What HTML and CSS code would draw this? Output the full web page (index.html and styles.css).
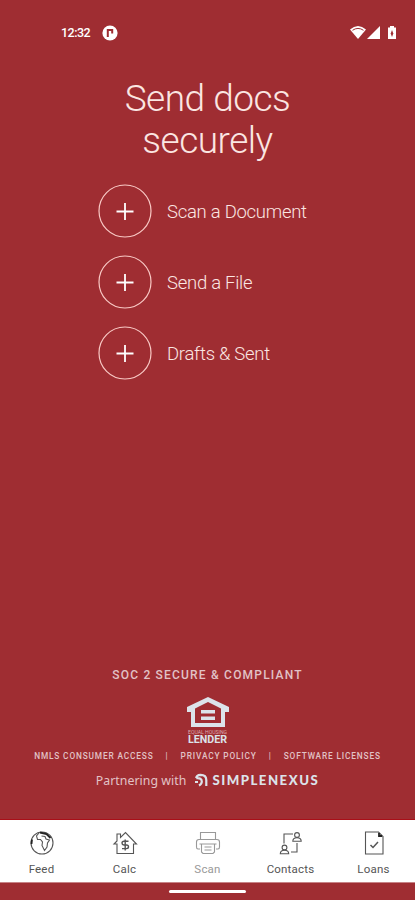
FILE: index.html
```html
<!DOCTYPE html>
<html lang="en">
<head>
  <meta charset="UTF-8">
  <title>Send docs securely</title>
  <link rel="stylesheet" href="styles.css">
</head>
<body>
  <div class="status-bar">
    <span class="time">12:32</span>
    <svg class="status-app" width="16" height="16" viewBox="0 0 16 16"><circle cx="8" cy="8" r="7.6" fill="#fff"/><path d="M5.8 12V4M5.8 5H10.2V8.5" fill="none" stroke="#9f2d32" stroke-width="2"/></svg>
    <svg class="status-icons" width="48" height="16" viewBox="0 0 48 16">
      <path d="M0 4.5Q8 -2.5 16 4.5L8 14Z" fill="#fff"/>
      <path d="M2.5 5.3Q8 1.5 13.5 5.3" fill="none" stroke="#9f2d32" stroke-width="1"/>
      <path d="M30 1V14H17Z" fill="#fff"/>
      <path d="M38 2.5H40V1H44V2.5H46V14H38Z" fill="#fff"/>
      <path d="M42 5L40.7 8.5L42 12L43.3 8.5Z" fill="#9f2d32"/>
    </svg>
  </div>

  <main>
    <h1>Send docs<br>securely</h1>
    <div class="actions">
      <a class="action">
        <svg width="54" height="54" viewBox="0 0 54 54"><circle cx="27" cy="27" r="26"/><path class="plus" d="M18.5 27.5H35.5M27 19V36"/></svg>
        <span>Scan a Document</span>
      </a>
      <a class="action">
        <svg width="54" height="54" viewBox="0 0 54 54"><circle cx="27" cy="27" r="26"/><path class="plus" d="M18.5 27.5H35.5M27 19V36"/></svg>
        <span>Send a File</span>
      </a>
      <a class="action">
        <svg width="54" height="54" viewBox="0 0 54 54"><circle cx="27" cy="27" r="26"/><path class="plus" d="M18.5 27.5H35.5M27 19V36"/></svg>
        <span>Drafts &amp; Sent</span>
      </a>
    </div>
  </main>

  <footer>
    <div class="soc">SOC 2 SECURE &amp; COMPLIANT</div>
    <div class="lender">
      <svg width="42" height="31" viewBox="0 0 42 31">
        <path d="M21 0L42 10V15H38V30H4V15H0V10ZM21 5L8 11.5V26H34V11.5Z" fill-rule="evenodd" fill="#dce3ea"/>
        <path d="M14 13H28V16.5H14ZM14 19.5H28V23H14Z" fill="#dce3ea"/>
      </svg>
      <svg width="42" height="16" viewBox="0 0 42 16">
        <text class="lender-small" x="1" y="6" textLength="39" lengthAdjust="spacingAndGlyphs">EQUAL HOUSING</text>
        <text class="lender-big" x="1" y="14.5" textLength="39" lengthAdjust="spacingAndGlyphs">LENDER</text>
      </svg>
    </div>
    <div class="links">
      <span>NMLS CONSUMER ACCESS</span><i>|</i><span>PRIVACY POLICY</span><i>|</i><span>SOFTWARE LICENSES</span>
    </div>
    <div class="partner">
      <span class="partner-text">Partnering with</span>
      <svg width="14" height="14" viewBox="0 0 14 14"><path d="M2.2 5.2Q2.5 2 6.5 1.8Q12.3 1.8 12.3 7V13M2.2 5.2Q7.8 4.6 7.8 8.5Q7.8 11 5 12.5M1 9H4" fill="none" stroke="#dce3ea" stroke-width="2.2"/></svg>
      <span class="brand">SIMPLENEXUS</span>
    </div>
  </footer>

  <nav>
    <a class="tab">
      <svg width="26" height="26" viewBox="0 0 26 26">
        <circle cx="13" cy="13" r="11"/>
        <path d="M10 3L7.5 6L8.5 9.5H11.5L13.5 12L13 15.5L15.5 20.5L18 17L18.5 13L20.5 10L17 9L16 6.5L12.5 6"/>
        <path class="heavy" d="M11 2.5L17.5 4L21.5 8M2.5 14L3 9.5"/>
      </svg>
      <span>Feed</span>
    </a>
    <a class="tab">
      <svg width="26" height="26" viewBox="0 0 26 26">
        <path d="M5 14V23.5H21.5V14H24.5L13.5 2.5L8.5 7.5V4H5V11L2 14Z"/>
        <path d="M16.5 11.2H12Q10 11.2 10 13T12 15H14.5Q16.5 15 16.5 16.8T14.5 18.6H10M13.2 9.5V20.5" stroke-width="1.4"/>
      </svg>
      <span>Calc</span>
    </a>
    <a class="tab active">
      <svg width="26" height="26" viewBox="0 0 26 26">
        <path d="M5.5 9V2.5H20.5V9M5 19H3Q1.5 19 1.5 17V12Q1.5 9.5 4 9.5H22Q24.5 9.5 24.5 12V17Q24.5 19 23 19H21M4.5 14H21.5M6.5 14V22L8 23.5H18L19.5 22V14M9.5 17H16.5M9.5 20H16.5"/>
      </svg>
      <span>Scan</span>
    </a>
    <a class="tab">
      <svg width="26" height="26" viewBox="0 0 26 26">
        <circle cx="19" cy="5" r="2.4"/><path d="M14.8 11.3Q14.8 7.8 19 7.8T23.2 11.3Z"/>
        <circle cx="6.5" cy="17.5" r="2.4"/><path d="M2.3 23.8Q2.3 20.3 6.5 20.3T10.7 23.8Z"/>
        <path d="M15 4H6V13.5M19 13V22H13"/>
      </svg>
      <span>Contacts</span>
    </a>
    <a class="tab">
      <svg width="26" height="26" viewBox="0 0 26 26">
        <path d="M4.5 2H17.5L22 6.5V24H4.5Z"/><path class="heavy" d="M18 3V6H21"/>
        <path d="M9.5 15L12 17.5L17 12" stroke-width="1.5"/>
      </svg>
      <span>Loans</span>
    </a>
  </nav>
  <div class="home"><div class="home-bar"></div></div>
</body>
</html>
```

FILE: styles.css
```css
* {
  box-sizing: border-box;
}
body {
  margin: 0;
  width: 415px;
  height: 900px;
  background: #9f2d32;
  color: #fbe6e2;
  font-family: Roboto, sans-serif;
  display: flex;
  flex-direction: column;
  overflow: hidden;
}
svg {
  display: block;
  flex: none;
}
.status-bar {
  height: 65px;
  padding: 0 17px 0 61px;
  display: flex;
  align-items: center;
  color: #fff;
}
.time {
  width: 41px;
  font-size: 12.5px;
  font-weight: 500;
  letter-spacing: -0.5px;
}
.status-icons {
  margin-left: auto;
}
h1 {
  margin: 13px 0 0;
  font-size: 37px;
  line-height: 42px;
  font-weight: 300;
  letter-spacing: -0.5px;
  text-align: center;
}
.actions {
  margin: 22px 0 0 98px;
  display: flex;
  flex-direction: column;
  gap: 17px;
}
.action {
  display: flex;
  align-items: center;
  gap: 15px;
  font-size: 18.5px;
  font-weight: 300;
  letter-spacing: -0.27px;
}
.action span {
  padding-top: 1px;
}
.action svg {
  fill: none;
  stroke: #f9c9c5;
  stroke-width: 1.2;
}
.action .plus {
  stroke: #fff;
  stroke-width: 1.8;
}
footer {
  margin-top: auto;
  height: 152px;
  display: flex;
  flex-direction: column;
  align-items: center;
  color: #e2c2c6;
}
.soc {
  font-size: 12px;
  font-weight: 500;
  line-height: 16px;
  letter-spacing: 1.2px;
}
.lender {
  margin-top: 14px;
}
.lender-small {
  font: 5px Roboto, sans-serif;
  fill: #dba9ae;
}
.lender-big {
  font: bold 10px Roboto, sans-serif;
  fill: #dce3ea;
}
.links {
  display: flex;
  margin-top: 6px;
  font-size: 8.3px;
  font-weight: 500;
  line-height: 12px;
  letter-spacing: 0.85px;
  white-space: nowrap;
}
.links i {
  width: 27px;
  text-align: center;
  font-style: normal;
}
.partner {
  display: flex;
  align-items: center;
  margin-top: 8px;
  height: 20px;
  white-space: nowrap;
}
.partner-text {
  font: 12.3px "Noto Sans", sans-serif;
  letter-spacing: 0.05px;
  margin-right: 8px;
}
.brand {
  margin-left: 4px;
  font: 900 13.2px Lato, sans-serif;
  letter-spacing: 1.5px;
  color: #dce3ea;
}
nav {
  height: 64px;
  background: #fff;
  border-top: 1px solid #a90f18;
  border-bottom: 1px solid #c78386;
  display: grid;
  grid-template-columns: repeat(5, 1fr);
}
.tab {
  display: flex;
  flex-direction: column;
  align-items: center;
  padding-top: 10px;
  font-size: 11.5px;
  line-height: 14px;
  letter-spacing: 0.2px;
  color: #555;
}
.tab span {
  margin-top: 6px;
}
.tab svg {
  fill: none;
  stroke: #555;
  stroke-width: 1.1;
}
.tab .heavy {
  stroke: #222;
  stroke-width: 1.8;
}
.tab.active {
  color: #999;
}
.tab.active svg {
  stroke: #999;
}
.home {
  height: 17px;
  display: flex;
  align-items: center;
  justify-content: center;
}
.home-bar {
  width: 77px;
  height: 3px;
  border-radius: 2px;
  background: #fff;
}
```
